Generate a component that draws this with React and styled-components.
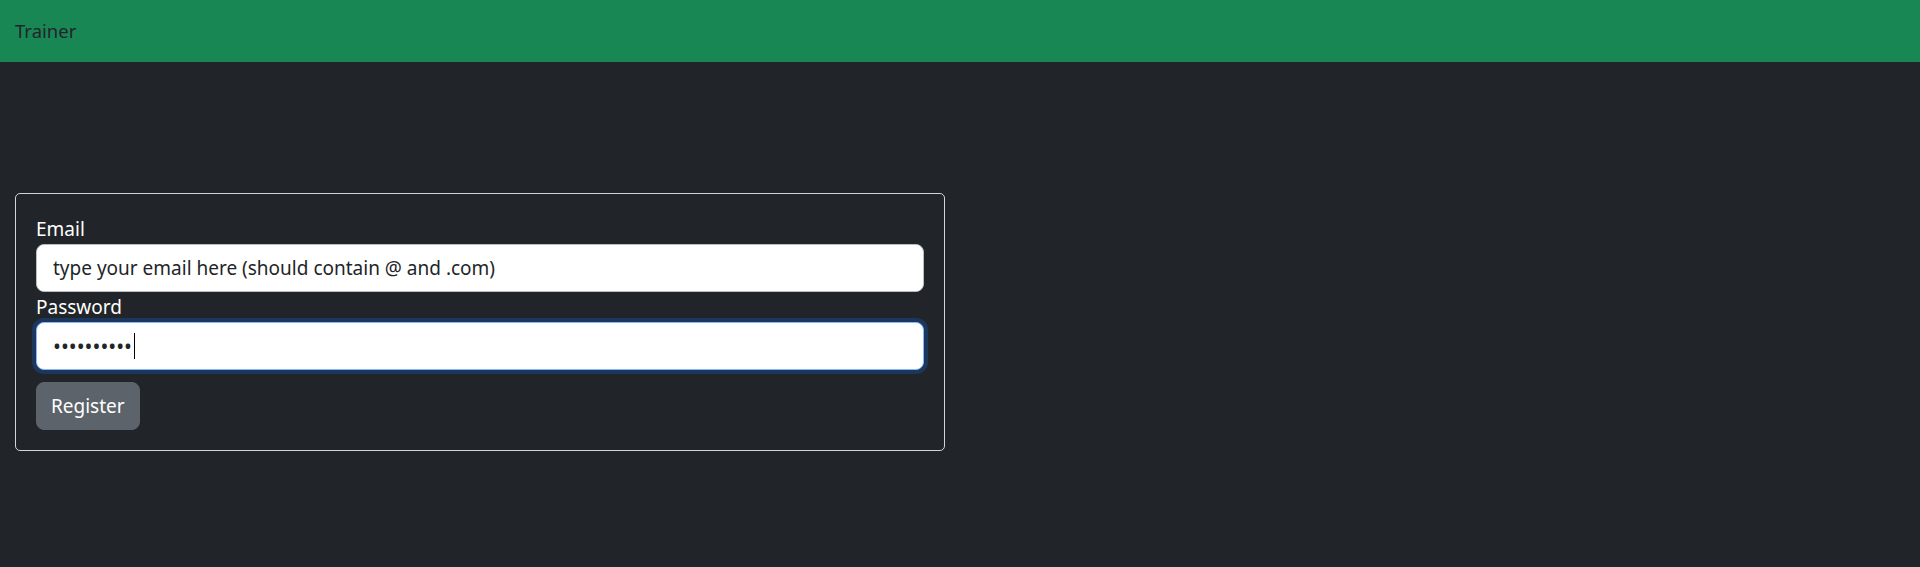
import React from "react";
import styled, { createGlobalStyle } from "styled-components";

const GlobalStyle = createGlobalStyle`
  *, *::before, *::after { box-sizing: border-box; }
  html, body { margin: 0; padding: 0; }
  body {
    background: #212529;
    color: #dee2e6;
    font-family: "Noto Sans", "Open Sans", sans-serif;
    font-size: 19px;
    line-height: 1.5;
  }
`;

const NavBar = styled.nav`
  height: 62px;
  background: #198754;
  display: flex;
  align-items: center;
  padding: 0 15px;
`;

const Brand = styled.span`
  color: #212529;
  font-size: 18.5px;
  line-height: 30px;
`;

const Main = styled.main`
  padding: 131px 15px 0;
`;

const Card = styled.form`
  width: 930px;
  border: 1px solid #d3d4d5;
  border-radius: 5px;
  padding: 20px;
  display: flex;
  flex-direction: column;
`;

const Label = styled.label`
  display: block;
  color: #ffffff;
  font-size: 19px;
  line-height: 30px;
`;

const Field = styled.div`
  position: relative;
`;

const Input = styled.input`
  display: block;
  width: 100%;
  height: 48px;
  padding: 8px 16px;
  font-family: inherit;
  font-size: ${(p) => p.$size || "19px"};
  line-height: 30px;
  color: #212529;
  background: #ffffff;
  border: 1px solid ${(p) => (p.$focused ? "#86b7fe" : "#b9bcc0")};
  border-radius: 8px;
  outline: none;
  caret-color: transparent;
  box-shadow: ${(p) => (p.$focused ? "0 0 0 4px rgba(13,110,253,0.25)" : "none")};
`;

const Caret = styled.span`
  position: absolute;
  left: 98px;
  top: 11px;
  width: 1px;
  height: 26px;
  background: #000;
`;

const Button = styled.button`
  align-self: flex-start;
  margin-top: 12px;
  height: 48px;
  padding: 0 14px;
  font-family: inherit;
  font-size: 19px;
  line-height: 30px;
  color: #ffffff;
  background: #5c636a;
  border: 1px solid #5c636a;
  border-radius: 8px;
`;

export default function App() {
  return (
    <>
      <GlobalStyle />
      <NavBar>
        <Brand>Trainer</Brand>
      </NavBar>
      <Main>
        <Card onSubmit={(e) => e.preventDefault()}>
          <Label htmlFor="email">Email</Label>
          <Input
            id="email"
            type="text"
            readOnly
            value="type your email here (should contain @ and .com)"
          />
          <Label htmlFor="password">Password</Label>
          <Field>
            <Input
              id="password"
              type="password"
              readOnly
              $focused
              $size="21px"
              value="abcdefghij"
            />
            <Caret />
          </Field>
          <Button type="submit">Register</Button>
        </Card>
      </Main>
    </>
  );
}
